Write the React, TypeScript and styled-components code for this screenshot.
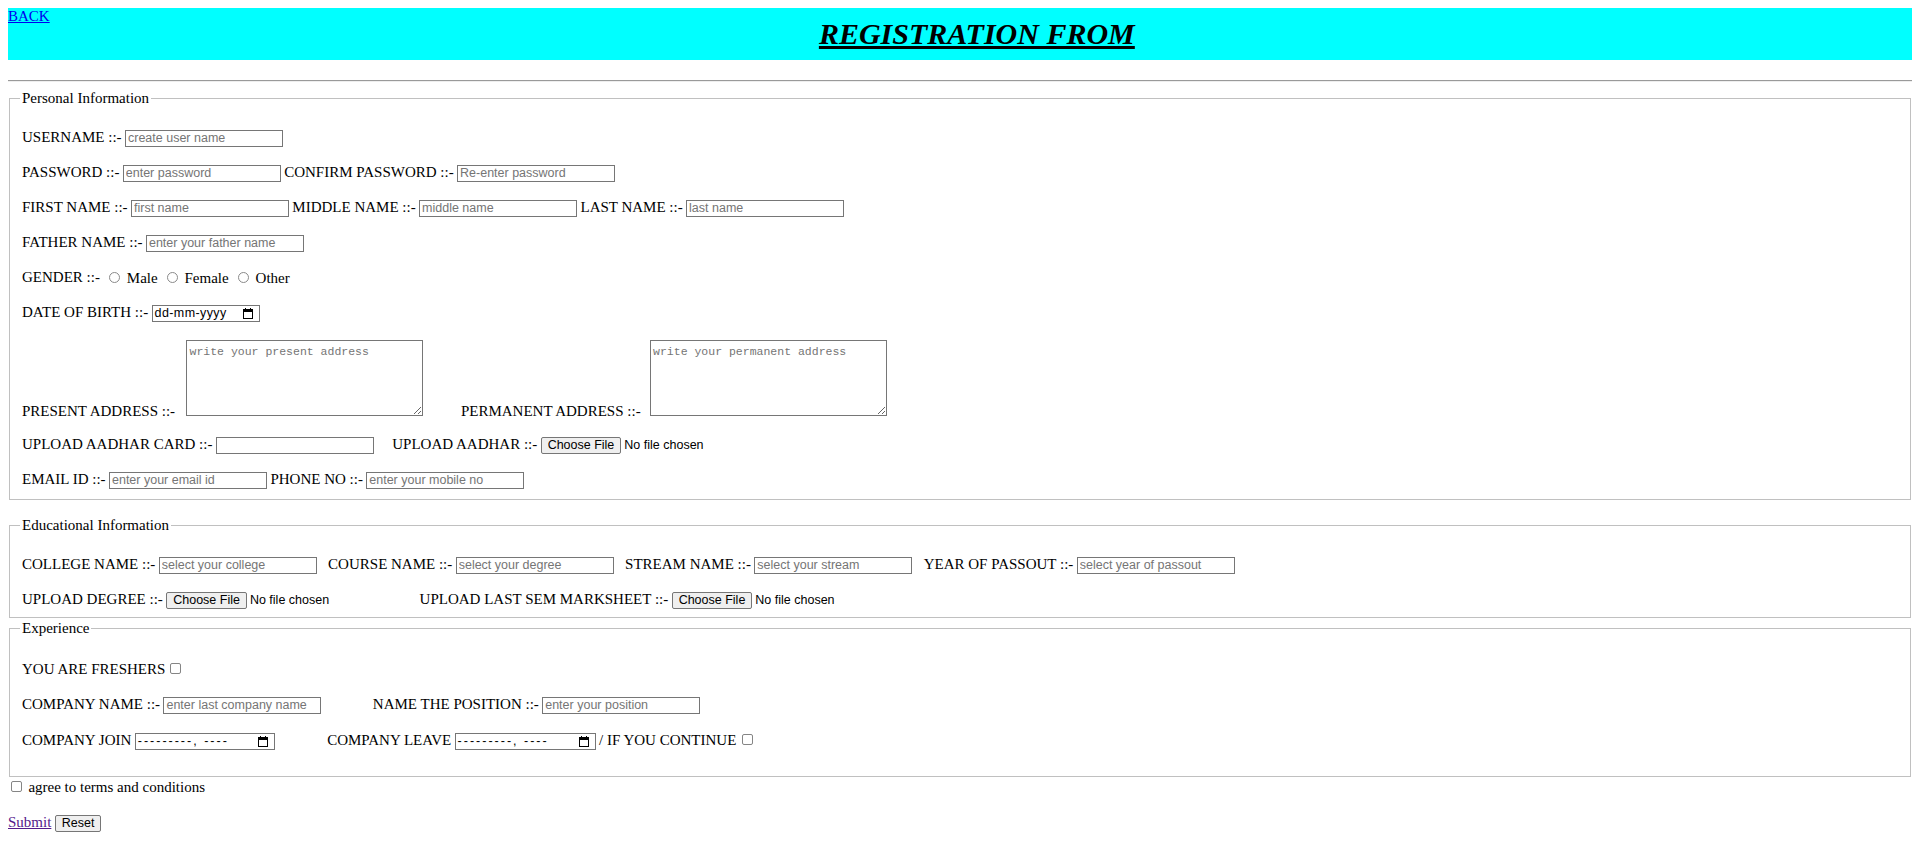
import React from "react";
import styled, { createGlobalStyle } from "styled-components";

const GlobalStyle = createGlobalStyle`
  * { box-sizing: border-box; }
  html, body { background: #ffffff; }
  body {
    margin: 8px;
    font-family: "Liberation Serif", "Times New Roman", serif;
    font-size: 15px;
    color: #000000;
  }
`;

const Header = styled.header`
  display: flex;
  align-items: flex-start;
  height: 52px;
  background: #00ffff;
`;

const BackLink = styled.a`
  color: #0000ee;
  text-decoration: underline;
  font-size: 15px;
  line-height: 17px;
`;

const Title = styled.h1`
  flex: 1;
  margin: 9px 0 0;
  padding-right: 8px;
  text-align: center;
  font-size: 30px;
  line-height: 34px;
  font-weight: bold;
  font-style: italic;
  text-decoration: underline;
`;

const Rule = styled.hr`
  margin: 20px 0 8px;
  height: 0;
  border: none;
  border-top: 1px solid #9a9a9a;
  border-bottom: 1px solid #eeeeee;
`;

const Fieldset = styled.fieldset<{ $mt: number; $pb: number }>`
  margin: ${(p) => p.$mt}px 1px 0;
  padding: 0 12px ${(p) => p.$pb}px;
  border: 1px solid #c0c0c0;
  min-width: 0;
`;

const Legend = styled.legend`
  margin-left: -2px;
  padding: 0 2px;
  font-size: 15px;
  line-height: 17px;
`;

const Rows = styled.div<{ $pt: number }>`
  display: flex;
  flex-direction: column;
  gap: 15px;
  padding-top: ${(p) => p.$pt}px;
`;

const Row = styled.div<{ $tall?: boolean; $mt?: number; $mb?: number }>`
  display: flex;
  align-items: ${(p) => (p.$tall ? "flex-end" : "center")};
  gap: 3.4px;
  height: ${(p) => (p.$tall ? "76px" : "20px")};
  margin-top: ${(p) => p.$mt ?? 0}px;
  margin-bottom: ${(p) => p.$mb ?? 0}px;
  white-space: nowrap;
`;

const Label = styled.span<{ $ml?: number; $tall?: boolean }>`
  line-height: ${(p) => (p.$tall ? "20px" : "18px")};
  margin-bottom: ${(p) => (p.$tall ? -5 : 2)}px;
  margin-left: ${(p) => p.$ml ?? 0}px;
`;

const TextInput = styled.input<{ $ml?: number }>`
  width: 158px;
  height: 17px;
  margin: 0 0 0 ${(p) => p.$ml ?? 0}px;
  padding: 1px 2px;
  border: 1px solid #767676;
  border-radius: 0;
  background: #ffffff;
  font-family: "Liberation Sans", Arial, sans-serif;
  font-size: 12.5px;
  &::placeholder {
    color: #757575;
  }
`;

const TextArea = styled.textarea<{ $ml?: number }>`
  width: 237px;
  height: 76px;
  margin: 0 0 0 ${(p) => p.$ml ?? 0}px;
  padding: 4px 2px 2px;
  border: 1px solid #767676;
  border-radius: 0;
  font-family: "Liberation Mono", "DejaVu Sans Mono", monospace;
  font-size: 11.5px;
  &::placeholder {
    color: #757575;
  }
`;

const FileField = styled.span`
  display: inline-flex;
  align-items: center;
  gap: 3px;
  width: 250px;
  font-family: "Liberation Sans", Arial, sans-serif;
  font-size: 12.5px;
`;

const SysButton = styled.button`
  height: 17px;
  margin: 0;
  padding: 0 6px;
  border: 1px solid #767676;
  border-radius: 2px;
  background: #efefef;
  color: #000000;
  font-family: "Liberation Sans", Arial, sans-serif;
  font-size: 12.5px;
  line-height: 15px;
`;

const DateField = styled.span<{ $w: number; $ml?: number }>`
  display: inline-flex;
  align-items: center;
  justify-content: space-between;
  width: ${(p) => p.$w}px;
  height: 17px;
  margin-left: ${(p) => p.$ml ?? 0}px;
  padding: 0 6px 0 2px;
  border: 1px solid #767676;
  background: #ffffff;
  font-family: "Liberation Sans", Arial, sans-serif;
  font-size: 12.5px;
`;

const DateText = styled.span<{ $spacing: number }>`
  letter-spacing: ${(p) => p.$spacing}px;
`;

const Radio = styled.input`
  appearance: none;
  width: 11px;
  height: 11px;
  margin: 0 3px 2px 5.5px;
  border: 1px solid #8a8a8a;
  border-radius: 50%;
  background: #ffffff;
`;

const Check = styled.input<{ $ml?: number }>`
  appearance: none;
  width: 11px;
  height: 11px;
  margin: 0 3px 4px ${(p) => p.$ml ?? 4}px;
  border: 1px solid #858585;
  border-radius: 2px;
  background: #ffffff;
`;

const Option = styled.label`
  display: inline-flex;
  align-items: center;
  line-height: 18px;
  gap: 4px;
`;

const Footer = styled.div`
  display: flex;
  flex-direction: column;
  gap: 15px;
  margin-top: 1px;
`;

const SubmitLink = styled.a`
  color: #551a8b;
  text-decoration: underline;
  line-height: 18px;
  margin-bottom: 2px;
`;

const CalendarIcon = () => (
  <svg width="10" height="11" viewBox="0 0 10 11" aria-hidden="true">
    <rect x="0.5" y="1.5" width="9" height="9" fill="none" stroke="#000" />
    <rect x="0" y="1" width="10" height="3" fill="#000" />
    <rect x="2" y="0" width="1" height="2" fill="#000" />
    <rect x="7" y="0" width="1" height="2" fill="#000" />
  </svg>
);

const DateBox = ({ w, text, spacing, ml }: { w: number; text: string; spacing: number; ml?: number }) => (
  <DateField $w={w} $ml={ml}>
    <DateText $spacing={spacing}>{text}</DateText>
    <CalendarIcon />
  </DateField>
);

const FileBox = () => (
  <FileField>
    <SysButton type="button">Choose File</SysButton>
    <span>No file chosen</span>
  </FileField>
);

export default function App() {
  return (
    <>
      <GlobalStyle />
      <Header>
        <BackLink href="#">BACK</BackLink>
        <Title>REGISTRATION FROM</Title>
      </Header>
      <Rule />
      <form onSubmit={(e) => e.preventDefault()}>
        <Fieldset $mt={0} $pb={9}>
          <Legend>Personal Information</Legend>
          <Rows $pt={21}>
            <Row>
              <Label>USERNAME ::-</Label>
              <TextInput placeholder="create user name" />
            </Row>
            <Row>
              <Label>PASSWORD ::-</Label>
              <TextInput type="password" placeholder="enter password" />
              <Label>CONFIRM PASSWORD ::-</Label>
              <TextInput type="password" placeholder="Re-enter password" />
            </Row>
            <Row>
              <Label>FIRST NAME ::-</Label>
              <TextInput placeholder="first name" />
              <Label>MIDDLE NAME ::-</Label>
              <TextInput placeholder="middle name" />
              <Label>LAST NAME ::-</Label>
              <TextInput placeholder="last name" />
            </Row>
            <Row>
              <Label>FATHER NAME ::-</Label>
              <TextInput placeholder="enter your father name" />
            </Row>
            <Row>
              <Label>GENDER ::-</Label>
              <Option>
                <Radio type="radio" name="gender" />
                Male
              </Option>
              <Option>
                <Radio type="radio" name="gender" />
                Female
              </Option>
              <Option>
                <Radio type="radio" name="gender" />
                Other
              </Option>
            </Row>
            <Row>
              <Label>DATE OF BIRTH ::-</Label>
              <DateBox w={108} text="dd-mm-yyyy" spacing={0.4} />
            </Row>
            <Row $tall $mt={2} $mb={4}>
              <Label $tall>PRESENT ADDRESS ::-</Label>
              <TextArea $ml={8} placeholder="write your present address" />
              <Label $tall $ml={34}>PERMANENT ADDRESS ::-</Label>
              <TextArea $ml={6} placeholder="write your permanent address" />
            </Row>
            <Row>
              <Label>UPLOAD AADHAR CARD ::-</Label>
              <TextInput />
              <Label $ml={15}>UPLOAD AADHAR ::-</Label>
              <FileBox />
            </Row>
            <Row>
              <Label>EMAIL ID ::-</Label>
              <TextInput type="email" placeholder="enter your email id" />
              <Label>PHONE NO ::-</Label>
              <TextInput placeholder="enter your mobile no" />
            </Row>
          </Rows>
        </Fieldset>

        <Fieldset $mt={17} $pb={7}>
          <Legend>Educational Information</Legend>
          <Rows $pt={21}>
            <Row>
              <Label>COLLEGE NAME ::-</Label>
              <TextInput placeholder="select your college" />
              <Label $ml={8}>COURSE NAME ::-</Label>
              <TextInput placeholder="select your degree" />
              <Label $ml={8}>STREAM NAME ::-</Label>
              <TextInput placeholder="select your stream" />
              <Label $ml={8}>YEAR OF PASSOUT ::-</Label>
              <TextInput placeholder="select year of passout" />
            </Row>
            <Row>
              <Label>UPLOAD DEGREE ::-</Label>
              <FileBox />
              <Label>UPLOAD LAST SEM MARKSHEET ::-</Label>
              <FileBox />
            </Row>
          </Rows>
        </Fieldset>

        <Fieldset $mt={2} $pb={25}>
          <Legend>Experience</Legend>
          <Rows $pt={23}>
            <Row>
              <Label>YOU ARE FRESHERS</Label>
              <Check type="checkbox" $ml={1} />
            </Row>
            <Row>
              <Label>COMPANY NAME ::-</Label>
              <TextInput placeholder="enter last company name" />
              <Label $ml={48}>NAME THE POSITION ::-</Label>
              <TextInput placeholder="enter your position" />
            </Row>
            <Row $mt={1}>
              <Label>COMPANY JOIN</Label>
              <DateBox w={140} text="---------, ----" spacing={2} />
              <Label $ml={49}>COMPANY LEAVE</Label>
              <DateBox w={141} text="---------, ----" spacing={2} />
              <Label>/ IF YOU CONTINUE</Label>
              <Check type="checkbox" $ml={2} />
            </Row>
          </Rows>
        </Fieldset>

        <Footer>
          <Row>
            <Check type="checkbox" $ml={3} />
            <Label>agree to terms and conditions</Label>
          </Row>
          <Row>
            <SubmitLink href="#">Submit</SubmitLink>
            <SysButton type="reset">Reset</SysButton>
          </Row>
        </Footer>
      </form>
    </>
  );
}
